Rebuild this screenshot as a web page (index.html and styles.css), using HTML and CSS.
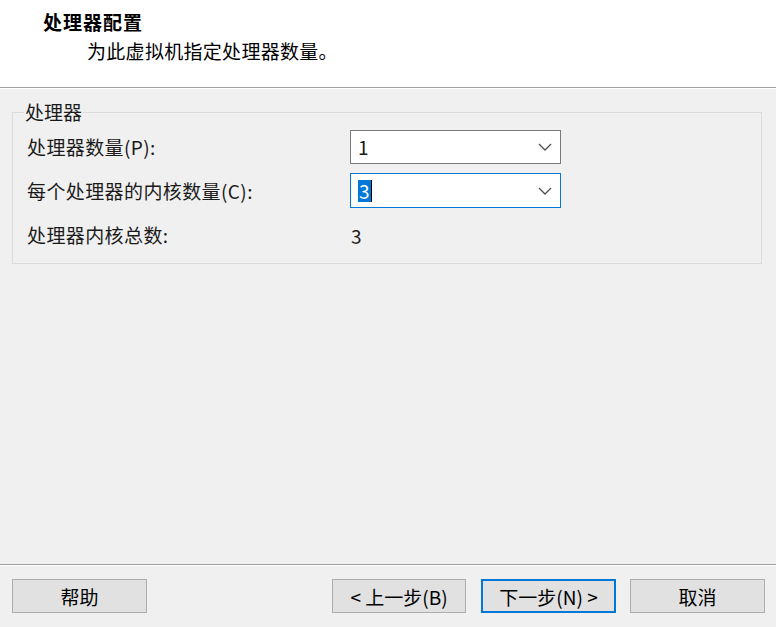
FILE: index.html
```html
<!DOCTYPE html>
<html lang="zh-CN">
<head>
    <meta charset="UTF-8">
    <title>处理器配置</title>
    <link rel="stylesheet" href="styles.css">
</head>
<body>
    <div class="wizard">
        <div class="header">
            <div class="title">处理器配置</div>
            <div class="subtitle">为此虚拟机指定处理器数量。</div>
        </div>

        <div class="content">
            <fieldset class="group">
                <legend>处理器</legend>
                <div class="row">
                    <label class="label">处理器数量(P):</label>
                    <div class="combo">
                        <span class="value">1</span>
                        <svg class="arrow" width="14" height="8" viewBox="0 0 14 8"><path d="M1 1 L7 7 L13 1" fill="none" stroke="#505050" stroke-width="1.3"/></svg>
                    </div>
                </div>
                <div class="row">
                    <label class="label">每个处理器的内核数量(C):</label>
                    <div class="combo focused">
                        <span class="value selected">3</span>
                        <svg class="arrow" width="14" height="8" viewBox="0 0 14 8"><path d="M1 1 L7 7 L13 1" fill="none" stroke="#505050" stroke-width="1.3"/></svg>
                    </div>
                </div>
                <div class="row total">
                    <span class="label">处理器内核总数:</span>
                    <span class="total-value">3</span>
                </div>
            </fieldset>
        </div>

        <div class="footer">
            <button class="btn">帮助</button>
            <div class="spacer"></div>
            <button class="btn back">&lt; 上一步(B)</button>
            <button class="btn default">下一步(N) &gt;</button>
            <button class="btn">取消</button>
        </div>
    </div>
</body>
</html>
```

FILE: styles.css
```css
html, body {
    margin: 0;
    padding: 0;
    background: #ffffff;
}
body {
    font-family: "Noto Sans CJK SC", "Noto Sans", sans-serif;
    font-size: 19px;
    color: #1a1a1a;
}
.wizard {
    width: 776px;
    height: 627px;
    background: #f0f0f0;
    display: flex;
    flex-direction: column;
}
.header {
    height: 88px;
    background: #ffffff;
    border-bottom: 1px solid #a0a0a0;
    box-sizing: border-box;
    padding: 8px 0 0 43px;
}
.title {
    font-weight: bold;
    font-size: 19px;
    line-height: 28px;
    letter-spacing: 1px;
    color: #000;
}
.subtitle {
    padding-left: 44px;
    line-height: 30px;
    letter-spacing: 0.3px;
    color: #000;
}
.content {
    flex: 1;
    padding: 12px 14px 0 12px;
    border-top: 1px solid #ffffff;
}
.group {
    margin: 0;
    padding: 7px 14px 10px 14px;
    border: 1px solid #dcdcdc;
}
.group legend {
    padding: 0 1px;
    margin-left: -3px;
    line-height: 22px;
}
.row {
    display: flex;
    align-items: center;
    margin-bottom: 9px;
}
.label {
    width: 323px;
    line-height: 24px;
    letter-spacing: 0.4px;
}
.combo {
    width: 211px;
    height: 34px;
    box-sizing: border-box;
    border: 1px solid #7a7a7a;
    background: #ffffff;
    display: flex;
    align-items: center;
    justify-content: space-between;
    padding: 0 8px 0 7px;
}
.combo.focused {
    border-color: #0078d7;
    height: 35px;
}
.value {
    line-height: 22px;
}
.value.selected {
    background: #0078d7;
    color: #ffffff;
    padding: 0 1px;
    border-right: 1px solid #000;
}
.total {
    height: 36px;
    margin-bottom: 0;
}
.total-value {
    padding-left: 1px;
}
.footer {
    border-top: 1px solid #a0a0a0;
    box-shadow: inset 0 1px 0 #ffffff;
    display: flex;
    align-items: flex-start;
    padding: 14px 11px 0 12px;
    height: 48px;
}
.spacer {
    flex: 1;
}
.btn {
    width: 135px;
    height: 34px;
    margin-left: 14px;
    background: #e1e1e1;
    border: 1px solid #adadad;
    font-family: inherit;
    font-size: 19px;
    color: #000;
    padding: 0;
}
.btn:first-child {
    margin-left: 0;
}
.btn.back {
    width: 134px;
}
.btn.default {
    border: 2px solid #0078d7;
    margin-left: 15px;
}
```
